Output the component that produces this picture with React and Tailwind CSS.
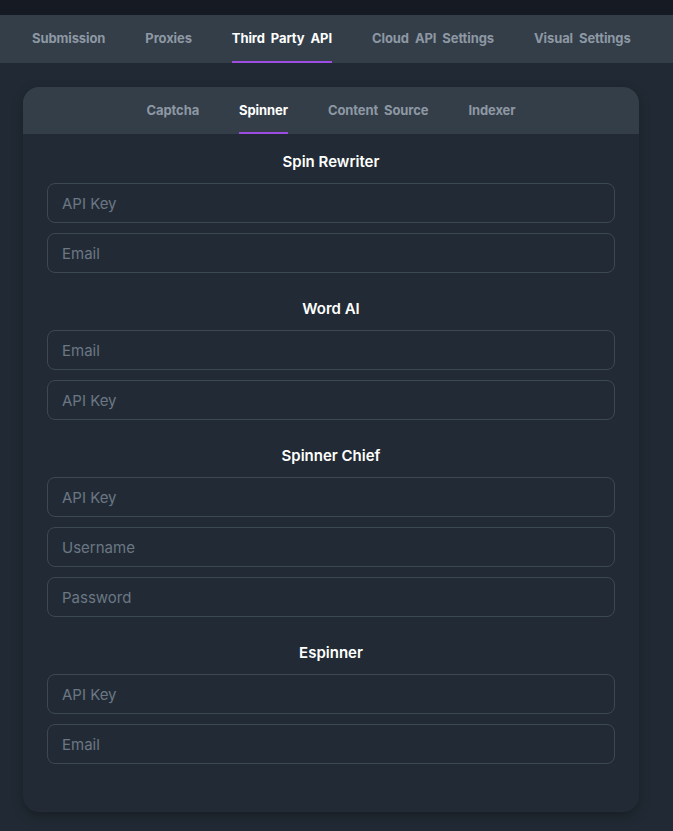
import { useState } from 'react';

const mainTabs = ['Submission', 'Proxies', 'Third Party API', 'Cloud API Settings', 'Visual Settings'];
const subTabs = ['Captcha', 'Spinner', 'Content Source', 'Indexer'];

const sections = [
  { title: 'Spin Rewriter', fields: ['API Key', 'Email'] },
  { title: 'Word AI', fields: ['Email', 'API Key'] },
  { title: 'Spinner Chief', fields: ['API Key', 'Username', 'Password'] },
  { title: 'Espinner', fields: ['API Key', 'Email'] },
];

function Tab({ label, active, onClick }) {
  return (
    <button
      onClick={onClick}
      className={`relative h-full px-5 text-[13px] font-bold tracking-[-0.1px] [word-spacing:3px] ${
        active ? 'text-white' : 'text-[#8d98a4] hover:text-gray-300'
      }`}
    >
      {label}
      {active && <span className="absolute left-5 right-5 bottom-0 h-[2px] bg-[#9d4ee0]" />}
    </button>
  );
}

export default function App() {
  const [tab, setTab] = useState('Third Party API');
  const [sub, setSub] = useState('Spinner');

  return (
    <div className="min-h-[831px] bg-[#212a34] font-['Inter',sans-serif]">
      <div className="h-[15px] bg-[#161b23]" />

      {/* main tabs */}
      <nav className="flex h-[48px] items-stretch bg-[#343e48] pl-3">
        {mainTabs.map((t) => (
          <Tab key={t} label={t} active={t === tab} onClick={() => setTab(t)} />
        ))}
      </nav>

      <div className="pl-[23px] pr-[34px] pt-[24px] pb-[19px]">
        <div className="overflow-hidden rounded-2xl bg-[#222b35] shadow-[0_4px_12px_rgba(0,0,0,0.3)]">
          {/* sub tabs */}
          <div className="flex h-[47px] justify-center bg-[#343e48]">
            {subTabs.map((t) => (
              <Tab key={t} label={t} active={t === sub} onClick={() => setSub(t)} />
            ))}
          </div>

          <div className="flex flex-col gap-[26px] px-6 pt-[18px] pb-[48px]">
            {sections.map((s) => (
              <section key={s.title}>
                <h3 className="mb-[11px] text-center text-[15px] leading-5 font-semibold text-white">
                  {s.title}
                </h3>
                <div className="flex flex-col gap-[10px]">
                  {s.fields.map((f) => (
                    <input
                      key={f}
                      type={f === 'Password' ? 'password' : 'text'}
                      placeholder={f}
                      className="h-[40px] w-full rounded-lg border border-[#3d4855] bg-transparent px-[14px] text-[15px] text-gray-200 placeholder:text-[#6b7784] focus:border-[#9d4ee0] focus:outline-none"
                    />
                  ))}
                </div>
              </section>
            ))}
          </div>
        </div>
      </div>
    </div>
  );
}
